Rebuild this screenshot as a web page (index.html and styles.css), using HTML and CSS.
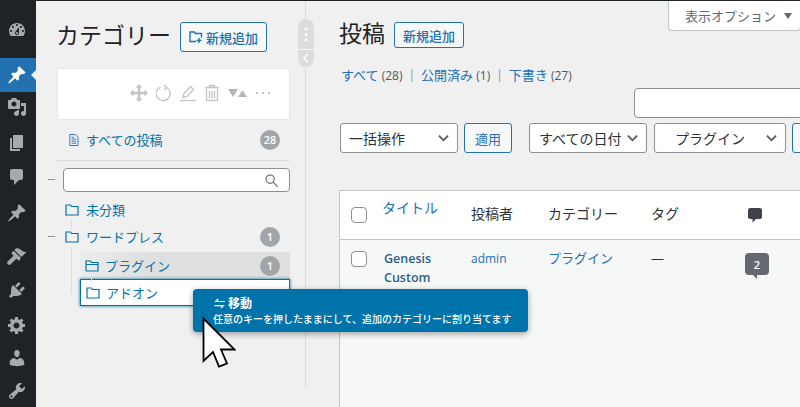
FILE: index.html
```html
<!DOCTYPE html>
<html lang="ja">
<head>
<meta charset="utf-8">
<title>投稿</title>
<link rel="stylesheet" href="styles.css">
</head>
<body>
<div class="topline"></div>
<div class="app">
  <nav class="side">
    <div class="mi mi-dash"><svg viewBox="0 0 20 20"><path d="M3.76 16h12.48c1.1-1.37 1.76-3.11 1.76-5 0-4.42-3.58-8-8-8s-8 3.58-8 8c0 1.89.66 3.63 1.76 5zM10 4c.55 0 1 .45 1 1s-.45 1-1 1-1-.45-1-1 .45-1 1-1zM6 6c.55 0 1 .45 1 1s-.45 1-1 1-1-.45-1-1 .45-1 1-1zm8 0c.55 0 1 .45 1 1s-.45 1-1 1-1-.45-1-1 .45-1 1-1zm-5.37 5.55L12 7v6c0 1.1-.9 2-2 2s-2-.9-2-2c0-.57.24-1.08.63-1.45zM4 10c.55 0 1 .45 1 1s-.45 1-1 1-1-.45-1-1 .45-1 1-1zm12 0c.55 0 1 .45 1 1s-.45 1-1 1-1-.45-1-1 .45-1 1-1zm-5 3c0-.55-.45-1-1-1s-1 .45-1 1 .45 1 1 1 1-.45 1-1z" fill-rule="evenodd"/></svg></div>
    <div class="mi mi-active"><svg viewBox="0 0 20 20"><path d="M10.44 3.02l1.82-1.82 6.36 6.35-1.83 1.82c-1.05-.68-2.48-.57-3.41.36l-.75.75c-.92.93-1.04 2.35-.35 3.41l-1.83 1.82-2.41-2.41-2.8 2.79c-.42.42-3.38 2.71-3.8 2.29s1.86-3.39 2.28-3.81l2.79-2.79L4.1 9.36l1.83-1.82c1.05.69 2.48.57 3.4-.36l.75-.75c.93-.92 1.05-2.35.36-3.41z"/></svg></div>
    <div class="mi mi-media"><svg viewBox="0 0 20 20"><path d="M13 11V4c0-.55-.45-1-1-1h-1.67L9 1H5L3.67 3H2c-.55 0-1 .45-1 1v7c0 .55.45 1 1 1h10c.55 0 1-.45 1-1zM7 4.5c1.38 0 2.5 1.12 2.5 2.5S8.38 9.5 7 9.5 4.5 8.38 4.5 7 5.62 4.5 7 4.5zM14 6h5v10.5c0 1.38-1.12 2.5-2.5 2.5S14 17.88 14 16.5s1.12-2.5 2.5-2.5c.17 0 .34.02.5.05V9h-3V6zm-4 8.05V13h2v3.5c0 1.38-1.12 2.5-2.5 2.5S7 17.88 7 16.5 8.12 14 9.5 14c.17 0 .34.02.5.05z"/></svg></div>
    <div class="mi mi-page"><svg viewBox="0 0 20 20"><path d="M6 15V2h10v13H6zm-1 1h8v2H3V5h2v11z"/></svg></div>
    <div class="mi"><svg viewBox="0 0 20 20"><path d="M5 2h9c1.1 0 2 .9 2 2v7c0 1.1-.9 2-2 2h-2l-5 5v-5H5c-1.1 0-2-.9-2-2V4c0-1.1.9-2 2-2z"/></svg></div>
    <div class="mi mi-pin"><svg viewBox="0 0 20 20"><path d="M10.44 3.02l1.82-1.82 6.36 6.35-1.83 1.82c-1.05-.68-2.48-.57-3.41.36l-.75.75c-.92.93-1.04 2.35-.35 3.41l-1.83 1.82-2.41-2.41-2.8 2.79c-.42.42-3.38 2.71-3.8 2.29s1.86-3.39 2.28-3.81l2.79-2.79L4.1 9.36l1.83-1.82c1.05.69 2.48.57 3.4-.36l.75-.75c.93-.92 1.05-2.35.36-3.41z"/></svg></div>
    <div class="mi mi-brush"><svg viewBox="0 0 20 20"><path d="M14.48 11.06L7.41 3.99l1.5-1.5c.5-.56 2.3-.47 3.51.32 1.21.8 1.43 1.28 2.91 2.1 1.18.64 2.45 1.26 4.45.85zm-.71.71L6.7 4.7 4.93 6.47c-.39.39-.39 1.02 0 1.41l1.06 1.06c.39.39.39 1.03 0 1.42-.6.6-5.64 5.64-5.64 5.64-.39.39-.39 1.03 0 1.42l1.41 1.41c.39.39 1.03.39 1.42 0 0 0 5.04-5.04 5.64-5.64.39-.39 1.03-.39 1.42 0l1.06 1.06c.39.39 1.02.39 1.41 0z"/></svg></div>
    <div class="mi"><svg viewBox="0 0 20 20"><path d="M13.11 4.36L9.87 7.6 8 5.73l3.24-3.24c.35-.34 1.05-.2 1.56.32.52.51.66 1.21.31 1.55zm-8 1.77l.91-1.12 9.01 9.01-1.19.84c-.71.71-2.63 1.16-3.82 1.16H6.14L4.9 17.26c-.59.59-1.54.59-2.12 0-.59-.58-.59-1.53 0-2.12l1.24-1.24v-3.88c0-1.13.4-3.19 1.09-3.89zm7.26 3.97l3.24-3.24c.34-.35 1.04-.21 1.55.31.52.51.66 1.21.31 1.55l-3.24 3.25z"/></svg></div>
    <div class="mi mi-tight"><svg viewBox="0 0 20 20"><path d="M18 12h-2.18c-.17.7-.44 1.35-.81 1.93l1.54 1.54-2.1 2.1-1.54-1.54c-.58.36-1.23.63-1.91.79V19H8v-2.18c-.68-.16-1.33-.43-1.91-.79l-1.54 1.54-2.12-2.12 1.54-1.54c-.36-.58-.63-1.23-.79-1.91H1V9.03h2.17c.16-.7.44-1.35.8-1.94L2.43 5.55l2.1-2.1 1.54 1.54c.58-.37 1.24-.64 1.93-.81V2h3v2.18c.68.16 1.33.43 1.91.79l1.54-1.54 2.12 2.12-1.54 1.54c.36.59.64 1.24.8 1.94H18V12zm-8.5 1.5c1.66 0 3-1.34 3-3s-1.34-3-3-3-3 1.34-3 3 1.34 3 3 3z"/></svg></div>
    <div class="mi mi-tight"><svg viewBox="0 0 20 20"><path d="M10 9.25c-2.27 0-2.73-3.44-2.73-3.44C7 4.02 7.82 2 9.97 2c2.16 0 2.98 2.02 2.71 3.81 0 0-.41 3.44-2.68 3.44zm0 2.57L12.72 10c2.39 0 4.52 2.33 4.52 4.53v2.49s-3.65 1.13-7.24 1.13c-3.65 0-7.24-1.13-7.24-1.13v-2.49c0-2.25 1.94-4.48 4.47-4.48z"/></svg></div>
    <div class="mi mi-tight"><svg viewBox="0 0 20 20"><path d="M16.68 9.77c-1.34 1.34-3.3 1.67-4.95.99l-5.41 6.52c-.99.99-2.59.99-3.58 0s-.99-2.59 0-3.57l6.52-5.42c-.68-1.65-.35-3.61.99-4.95 1.28-1.28 3.12-1.62 4.72-1.06l-2.89 2.89 2.82 2.82 2.86-2.87c.53 1.58.18 3.39-1.08 4.65zM3.81 16.21c.4.39 1.04.39 1.43 0 .4-.4.4-1.04 0-1.43-.39-.4-1.03-.4-1.43 0-.39.39-.39 1.03 0 1.43z" fill-rule="evenodd"/></svg></div>
  </nav>

  <aside class="pane">
    <div class="head">
      <h2 class="h-title">カテゴリー</h2>
      <a class="btn btn-cat"><svg class="btn-ic" viewBox="0 0 14 12"><path d="M1 2.5V10.5H7M1 2.5V1H5.5L6.5 2.5H12.5V6.5" fill="none" stroke="#2271b1" stroke-width="1.4"/><path d="M10 7V12M7.5 9.5H12.5" fill="none" stroke="#2271b1" stroke-width="1.4"/></svg>新規追加</a>
    </div>
    <div class="toolbox">
      <svg class="tool t-move" viewBox="0 0 18 18"><path d="M9 0l3.500 3.500H10.300V7.700H14.500V5.500L18 9l-3.500 3.500V10.300H10.300V14.500H12.500L9 18l-3.500-3.500H7.700V10.300H3.500V12.500L0 9l3.500-3.500V7.700H7.700V3.500H5.500z"/></svg>
      <svg class="tool t-line" viewBox="0 0 16 18"><path d="M10.500 3.500A7 7 0 1 1 4.500 3.200M8 1L11 3.500 8 6"/></svg>
      <svg class="tool t-line" viewBox="0 0 16 18"><path d="M0 16.500H16"/><path class="t-fill" d="M3 13.500l1-4L10.500 2.500l3 3L7 12.500z"/></svg>
      <svg class="tool t-line" viewBox="0 0 16 18"><path d="M1 3.500H15M5.500 3.500V1.500H10.500V3.500M2.500 3.500V16.500H13.500V3.500M5.500 7V14M8 7V14M10.500 7V14"/></svg>
      <svg class="tool t-wide" viewBox="0 0 19 8"><path d="M0 0H10L5 8zM10 8L14.500 1 19 8z"/></svg>
      <span class="t-dots"><i></i><i></i><i></i></span>
    </div>
    <div class="all-row">
      <svg class="doc-ic" viewBox="0 0 12 14"><path d="M2 1H8L11 4V13H2zM4 6H9M4 8.300H9M4 10.500H9M4 4H6.500"/></svg>
      <a class="link all-link">すべての投稿</a>
      <span class="badge">28</span>
    </div>
    <div class="search-row">
      <span class="minus"></span>
      <div class="search-box"><svg class="search-ic" viewBox="0 0 14 14"><circle cx="5.500" cy="5.500" r="4.500"/><path d="M9 9l4.500 4.500"/></svg></div>
    </div>
    <div class="tree">
      <span class="guide g1"></span><span class="guide g2"></span><span class="guide g3"></span>
      <div class="node"><svg class="fold" viewBox="0 0 14 12"><path d="M1 11V1H5.500L6.500 2.500H13V11z"/></svg><a class="link">未分類</a></div>
      <div class="node node-parent"><span class="minus minus-node"></span><svg class="fold" viewBox="0 0 14 12"><path d="M1 11V1H5.500L6.500 2.500H13V11z"/></svg><a class="link">ワードプレス</a><span class="badge">1</span></div>
      <div class="child child-sel"><svg class="fold" viewBox="0 0 14 12"><path d="M1 11V1H5.500L6.500 2.500H13V4.500H1M1 11H13V4.500"/></svg><a class="link">プラグイン</a><span class="badge">1</span></div>
      <div class="child child-drag"><svg class="fold" viewBox="0 0 14 12"><path d="M1 11V1H5.500L6.500 2.500H13V11z"/></svg><a class="link">アドオン</a></div>
    </div>
  </aside>

  <div class="grip">
    <span class="grip-dots">⋮</span>
    <svg class="grip-chev" viewBox="0 0 8 10"><path d="M6 1L2 5L6 9"/></svg>
  </div>

  <main class="main">
    <div class="head head-main">
      <h1 class="h-title h-posts">投稿</h1>
      <a class="btn btn-post">新規追加</a>
    </div>
    <ul class="subs">
      <li><a class="link-b">すべて</a> <span class="cnt">(28)</span></li>
      <li class="sep">|</li>
      <li><a class="link-b">公開済み</a> <span class="cnt">(1)</span></li>
      <li class="sep">|</li>
      <li><a class="link-b">下書き</a> <span class="cnt">(27)</span></li>
    </ul>
    <div class="post-search"></div>
    <div class="filters">
      <div class="sel sel-bulk"><span class="sel-text">一括操作</span><svg class="chev" viewBox="0 0 12 8"><path d="M1 1.500L6 6.500L11 1.500"/></svg></div>
      <a class="btn btn-apply">適用</a>
      <div class="sel sel-date"><span class="sel-text">すべての日付</span><svg class="chev" viewBox="0 0 12 8"><path d="M1 1.500L6 6.500L11 1.500"/></svg></div>
      <div class="sel sel-cat"><span class="sel-text">プラグイン</span><svg class="chev" viewBox="0 0 12 8"><path d="M1 1.500L6 6.500L11 1.500"/></svg></div>
      <a class="btn btn-more"></a>
    </div>
    <div class="table">
      <div class="tr thead">
        <div class="td td-cb"><span class="cb"></span></div>
        <div class="td th-title"><a class="link-l">タイトル</a></div>
        <div class="td">投稿者</div>
        <div class="td">カテゴリー</div>
        <div class="td">タグ</div>
        <div class="td"><svg class="cm-ic" viewBox="0 0 14 15"><path d="M2 0H12C13 0 14 1 14 2V9C14 10 13 11 12 11H8L4.500 14.500V11H2C1 11 0 10 0 9V2C0 1 1 0 2 0z"/></svg></div>
      </div>
      <div class="tr tbody">
        <div class="td td-cb"><span class="cb"></span></div>
        <div class="td td-name"><a>Genesis Custom</a></div>
        <div class="td"><a class="link-l link-sm">admin</a></div>
        <div class="td"><a class="link-l">プラグイン</a></div>
        <div class="td td-dash">—</div>
        <div class="td"><span class="bubble">2</span></div>
      </div>
    </div>
  </main>
</div>

<a class="screen-opt">表示オプション<span class="so-arrow"></span></a>

<div class="tip">
  <div class="tip-title"><span class="tip-sym">⇋</span> 移動</div>
  <div class="tip-text">任意のキーを押したままにして、追加のカテゴリーに割り当てます</div>
</div>
<svg class="cursor" viewBox="0 0 34 52"><path d="M1.500 1.500V44L11 35 17 49.500 25 46.500 19 32.500H32.500z"/></svg>
</body>
</html>
```

FILE: styles.css
```css
* { box-sizing: border-box; }
html, body { margin: 0; padding: 0; height: 100%; overflow: hidden; }
body {
  background: #f0f0f1;
  color: #2c3338;
  font-family: "Open Sans", "Noto Sans CJK JP", sans-serif;
  font-size: 13px;
  position: relative;
}
a { text-decoration: none; }
.topline { height: 1px; background: #1d2327; }
.app { display: flex; height: 406px; }

/* admin menu */
.side { width: 36px; flex: none; background: #1d2327; padding-top: 12px; display: flex; flex-direction: column; }
.mi { height: 34px; display: flex; align-items: center; padding-left: 7px; position: relative; flex: none; }
.mi svg { width: 20px; height: 20px; fill: #a7aaad; }
.mi-active { background: #2271b1; margin-top: 11px; }
.mi-active svg { fill: #fff; }
.mi-active::after {
  content: ""; position: absolute; right: 0; top: 12px;
  border: 5px solid transparent; border-right-color: #f0f0f1; border-left-width: 0;
}
.mi-media { margin-bottom: 2px; margin-top: -2px; }
.mi-pin { margin-top: 2px; }
.mi-brush { margin-top: 9px; }
.mi-tight { margin-top: 1px; }
.mi-tight + .mi-tight { margin-top: -1px; }

/* category pane */
.pane { width: 270px; height: 386px; flex: none; border-right: 1px solid #dcdcde; padding: 21px 15px 0 21px; }
.head { display: flex; align-items: center; }
.h-title { margin: 0 0 3px -1px; font-size: 23px; font-weight: 400; line-height: 27px; color: #1d2327; }
.btn {
  display: inline-flex; align-items: center; justify-content: center;
  border: 1px solid #2271b1; border-radius: 3px; background: #f6f7f7; color: #2271b1;
  font-size: 13px; font-weight: 500;
}
.btn-cat { margin-left: 9px; width: 87px; height: 30px; }
.btn-ic { width: 14px; height: 12px; margin-right: 3px; }
.toolbox {
  margin-top: 16px; height: 52px; background: #fff; border: 1px solid #e6e6e7;
  display: flex; align-items: center; justify-content: flex-end; padding: 0 19px 2px 0; gap: 8px;
}
.tool { flex: none; width: 16px; height: 18px; fill: none; stroke: #c3c4c7; stroke-width: 1.3; }
.t-move { fill: #c3c4c7; stroke: none; width: 18px; }
.t-fill { fill: none; }
.t-wide { width: 19px; height: 8px; fill: #b4b6b9; stroke: none; }
.t-dots { display: flex; gap: 4px; margin-left: 1px; width: 14px; }
.t-dots i { display: block; width: 2px; height: 2px; border-radius: 50%; background: #b4b6b9; flex: none; }
.all-row { display: flex; align-items: center; height: 41px; padding: 0 10px 1px 11px; border-bottom: 1px solid #dcdcde; }
.doc-ic { width: 11px; height: 14px; fill: none; stroke: #2271b1; stroke-width: 1; margin-right: 7px; }
.link { color: #0073aa; font-size: 13px; }
.all-link { flex: 1; }
.badge {
  margin-left: auto; width: 20px; height: 20px; border-radius: 50%; background: #a0a5aa; color: #fff;
  font-size: 11px; font-weight: 600; display: flex; align-items: center; justify-content: center; flex: none;
}
.search-row { display: flex; align-items: center; margin-top: 7px; position: relative; padding-left: 6px; }
.minus { position: absolute; left: -9px; top: 11px; width: 7px; height: 1px; background: #8c8f94; }
.search-box {
  flex: 1; height: 24px; background: #fff; border: 1px solid #8c8f94; border-radius: 4px;
  display: flex; align-items: center; justify-content: flex-end; padding-right: 11px;
}
.search-ic { width: 13px; height: 13px; fill: none; stroke: #50575e; stroke-width: 1.1; }
.tree { position: relative; margin-top: 4px; }
.guide { position: absolute; width: 1px; background: #dcdcde; }
.g1 { left: 14px; top: 24px; height: 8px; }
.g2 { left: 14px; top: 51px; height: 47px; }
.g3 { left: 34px; top: 79px; height: 8px; z-index: 1; }
.node { height: 27px; display: flex; align-items: center; padding: 0 10px 0 8px; position: relative; }
.minus-node { left: -9px; top: 13px; }
.fold { width: 14px; height: 12px; fill: none; stroke: #0073aa; stroke-width: 1.2; margin-right: 7px; flex: none; }
.child { height: 27px; margin-left: 23px; display: flex; align-items: center; padding: 0 10px 0 5px; }
.child .fold { margin-right: 6px; }
.child-sel { background: linear-gradient(90deg, #ececed, #dfdfe0 35%); margin-top: 2px; }
.child-drag { background: #fff; border: 1px solid #0073aa; box-shadow: 0 0 3px #0073aa; padding-left: 5px; }

/* collapse handle */
.grip {
  position: absolute; left: 298px; top: 19px; width: 16px; height: 48px; border-radius: 8px;
  background: #dcdcde; overflow: hidden; display: flex; flex-direction: column; align-items: center;
}
.grip-dots { height: 31px; color: #fff; font-size: 16px; line-height: 31px; font-weight: 700; border-bottom: 1px solid #f6f7f7; width: 100%; text-align: center; }
.grip-chev { width: 8px; height: 10px; margin-top: 3px; fill: none; stroke: #fff; stroke-width: 1.3; }

/* main */
.main { flex: 1; min-width: 0; padding-left: 34px; overflow: hidden; }
.head-main { height: 30px; margin-top: 19px; }
.h-posts { color: #1d2327; }
.btn-post { margin-left: 9px; width: 70px; height: 26px; }
.subs { list-style: none; margin: 14px 0 0 1px; padding: 0; display: flex; gap: 6px; height: 20px; align-items: center; font-size: 12px; }
.link-b { color: #2271b1; font-size: 13px; }
.cnt { color: #50575e; font-size: 12px; }
.sep { color: #8c8f94; }
.post-search { margin: 4px 0 0 294px; width: 200px; height: 30px; background: #fff; border: 1px solid #8c8f94; border-radius: 4px; }
.filters { display: flex; margin-top: 5px; height: 30px; width: 500px; }
.sel {
  height: 30px; background: #fff; border: 1px solid #8c8f94; border-radius: 3px; color: #2c3338;
  font-size: 14px; display: flex; align-items: center; justify-content: space-between; flex: none;
}
.chev { width: 11px; height: 8px; fill: none; stroke: #50575e; stroke-width: 2; }
.sel-bulk { width: 118px; padding: 0 8px; }
.btn-apply { width: 48px; height: 30px; margin-left: 6px; font-weight: 400; flex: none; }
.sel-date { width: 118px; margin-left: 17px; padding: 0 8px 0 9px; }
.sel-cat { width: 132px; margin-left: 7px; padding: 0 8px 0 20px; }
.btn-more { width: 40px; height: 30px; margin-left: 6px; flex: none; }

.table { margin: 37px 0 0 -1px; width: 520px; height: 300px; border: 1px solid #c3c4c7; border-right: 0; background: #f6f7f7; }
.tr { display: grid; grid-template-columns: 42px 89px 77px 103px 96px 1fr; }
.thead { height: 49px; background: #fff; border-bottom: 1px solid #c3c4c7; font-size: 14px; color: #2c3338; align-items: start; }
.thead .td { padding-top: 12px; }
.thead .td-cb { padding-top: 16px; }
.thead .th-title { padding-top: 6px; }
.link-l { color: #2271b1; font-size: 14px; }
.td-cb { padding-left: 11px; }
.cb { display: block; width: 16px; height: 16px; background: #fff; border: 1px solid #8c8f94; border-radius: 4px; }
.cm-ic { display: block; width: 14px; height: 15px; fill: #3c434a; margin: 5px 0 0 1px; }
.tbody { padding-top: 9px; font-size: 13px; }
.tbody .td-cb { padding-top: 2px; }
.td-name { font-size: 12.5px; font-weight: 600; line-height: 19px; padding: 0 20px 0 2px; }
.td-name a { color: #2c5f8a; }
.link-sm { font-size: 12px; line-height: 19px; }
.tbody .td:nth-child(4) .link-l { font-size: 13px; line-height: 19px; }
.td-dash { line-height: 19px; }
.bubble {
  position: relative; display: flex; align-items: center; justify-content: center; margin: 4px 0 0 -2px;
  width: 24px; height: 22px; background: #646970; border-radius: 4px; color: #fff; font-size: 11px; font-weight: 600;
}
.bubble::after {
  content: ""; position: absolute; left: 8px; top: 22px;
  border-top: 4px solid #646970; border-left: 4px solid transparent;
}

/* screen options tab */
.screen-opt {
  position: absolute; left: 668px; top: 1px; width: 133px; height: 30px; background: #fff;
  border: 1px solid #c3c4c7; border-top: 0; border-radius: 0 0 4px 4px; color: #646970; font-size: 13px;
  display: flex; align-items: center; padding-left: 16px;
}
.so-arrow { margin-left: 8px; border: 4px solid transparent; border-top: 6px solid #646970; border-bottom: 0; }

/* tooltip and pointer */
.tip {
  position: absolute; left: 193px; top: 289px; width: 335px; height: 43px; background: #0073aa; border-radius: 4px;
  color: #fff; box-shadow: 0 2px 6px rgba(0,0,0,.35); padding: 5px 0 0 20px;
}
.tip-title { font-size: 12px; font-weight: 600; line-height: 19px; padding-left: 1px; }
.tip-sym { font-size: 11px; }
.tip-text { font-size: 10px; line-height: 15px; font-weight: 500; margin-top: -1px; white-space: nowrap; }
.cursor { position: absolute; left: 202px; top: 317px; width: 34px; height: 52px; fill: #fff; stroke: #000; stroke-width: 1.8; stroke-linejoin: miter; }
```
